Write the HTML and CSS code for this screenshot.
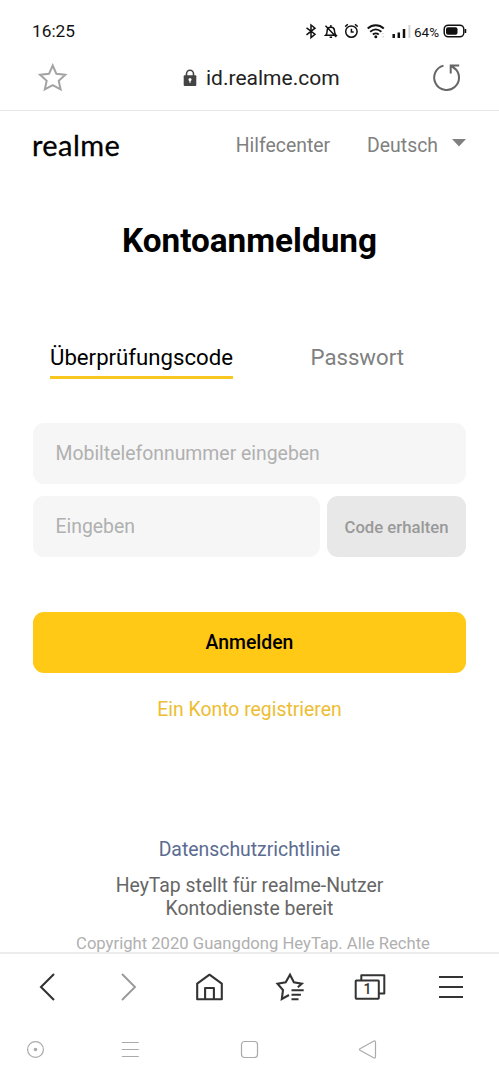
FILE: index.html
```html
<!DOCTYPE html>
<html lang="de">
<head>
<meta charset="utf-8">
<title>Kontoanmeldung</title>
<link rel="stylesheet" href="styles.css">
</head>
<body>
<div class="statusbar">
  <span class="clock">16:25</span>
  <div class="status-icons">
    <svg width="115" height="20" viewBox="0 0 115 20" fill="none" stroke="#111" stroke-width="1.500">
      <path d="M1.500 6.800L10 13.200 6 16.600V4L10 7.200 1.500 13.800"/>
      <path d="M20.700 14.300C22.300 13 22 11 22.200 9c.3-3 6.200-4.200 7.200 0 .2 2 0 3.600 1.600 5.300zM20.500 4.700l10.800 11.200M25.900 4v1.500M24.600 16.300h2.500"/>
      <circle cx="46.400" cy="10.600" r="5.700"/>
      <path d="M46.400 7.700v3.200h2.300M40.200 5.600l2.600-2.300M52.700 5.600L50 3.300"/>
      <path d="M62.700 7.500c4.800-4.300 11.300-4.300 16.100 0M65.200 10.700c3.600-3 7.600-3 11.200 0M67.800 13.500c2-1.500 4-1.500 6 0" stroke-width="1.900"/>
      <circle cx="70.800" cy="15.800" r="1.500" fill="#111" stroke="none"/>
      <path d="M76.600 13.300l1.200-1.300 1.200 1.300M76.600 15l1.200 1.300 1.200-1.300" stroke="#ccc" stroke-width=".8"/>
      <path d="M88.700 17v-4M93.800 17v-5.600M99 17V8" stroke-width="2.500"/>
      <path d="M104.400 17V4" stroke="#d4d4d4" stroke-width="2"/>
    </svg>
    <span class="percent">64%</span>
    <svg width="24" height="14" viewBox="0 0 24 14">
      <rect x="1.200" y="1.200" width="19.600" height="11.600" rx="4" fill="#fff" stroke="#111" stroke-width="1.500"/>
      <rect x="3" y="3.200" width="11.500" height="7.600" rx="2" fill="#111"/>
      <path d="M22.500 5v4" stroke="#111" stroke-width="1.500"/>
    </svg>
  </div>
</div>
<div class="urlbar">
  <svg width="30" height="30" viewBox="0 0 30 30" fill="none" stroke="#a3a3a3" stroke-width="2">
    <path d="M14.700 2.500l3.700 8.300 8.900 1-6.600 6 1.900 8.600-7.900-4.300-7.900 4.300 1.900-8.600-6.600-6 8.900-1z"/>
  </svg>
  <div class="url">
    <svg width="14" height="18" viewBox="0 0 14 18">
      <path d="M3.500 7V4.700a3.500 3.500 0 0 1 7 0V7" fill="none" stroke="#444" stroke-width="1.600"/>
      <rect x=".7" y="6.300" width="12.600" height="10.700" rx="1" fill="#444"/>
      <circle cx="7" cy="10.500" r="1.500" fill="#fff"/><path d="M7 10.500v3.300" stroke="#fff" stroke-width="1.200"/>
    </svg>
    <span>id.realme.com</span>
  </div>
  <svg width="30" height="30" viewBox="0 0 30 30" fill="none" stroke="#666" stroke-width="2">
    <path d="M11.500 2.600A12.400 12.400 0 1 0 21.500 4.300L19.500 3M18.700 10.500V2.500h8.500M18.700 2.500l5 4"/>
  </svg>
</div>
<main class="page">
  <header class="site-header">
    <span class="logo">realme</span>
    <span class="help">Hilfecenter</span>
    <span class="language">Deutsch</span>
    <svg class="caret" width="14" height="8" viewBox="0 0 14 8"><path d="M0 0h14L7 7.500z" fill="#808080"/></svg>
  </header>
  <h1 class="title">Kontoanmeldung</h1>
  <nav class="tabs">
    <span class="tab active">Überprüfungscode</span>
    <span class="tab">Passwort</span>
  </nav>
  <form class="form">
    <div class="field">Mobiltelefonnummer eingeben</div>
    <div class="code-row">
      <div class="field">Eingeben</div>
      <button type="button" class="get-code">Code erhalten</button>
    </div>
    <button type="button" class="submit">Anmelden</button>
  </form>
  <div class="register">Ein Konto registrieren</div>
  <footer class="footer">
    <div class="privacy">Datenschutzrichtlinie</div>
    <div class="service">HeyTap stellt für realme-Nutzer<br>Kontodienste bereit</div>
    <div class="copyright">Copyright 2020 Guangdong HeyTap. Alle Rechte</div>
  </footer>
</main>
<nav class="browser-nav">
  <svg viewBox="0 0 34 34" fill="none" stroke="#333" stroke-width="2.100"><path d="M23 4L10 17l13 13"/></svg>
  <svg viewBox="0 0 34 34" fill="none" stroke="#999" stroke-width="1.900"><path d="M10 4l13 13-13 13"/></svg>
  <svg viewBox="0 0 34 34" fill="none" stroke="#333" stroke-width="2.100" stroke-linejoin="round"><path d="M5.200 13.700L17.500 4.700l12.300 9v15.600H5.200zM13.100 29V18h8.800v11"/></svg>
  <svg viewBox="0 0 34 34" fill="none" stroke="#333" stroke-width="2.100"><path d="M16 25L8.800 29l1.200-9-5.500-6.300 8.200-1.500L17 4.700l3.900 7.500 7.900 1.500-4 3.500M18.500 20.200h12.200M18.500 24.700h9.400M18.500 29.200h7"/></svg>
  <svg viewBox="0 0 34 34" fill="none" stroke="#333" stroke-width="2" stroke-linejoin="round"><path d="M8.300 10V5.200h23v18.300h-5.500"/><rect x="2.700" y="10.400" width="23.100" height="18.300" rx=".6"/><text x="14.500" y="24.300" class="tab-count">1</text></svg>
  <svg viewBox="0 0 34 34" fill="none" stroke="#333" stroke-width="2.200"><path d="M5 7h24M5 17h24M5 27h24"/></svg>
</nav>
<div class="system-nav">
  <svg viewBox="0 0 20 20" fill="none" stroke="#aaa" stroke-width="1.200"><circle cx="10.500" cy="9.500" r="7.900"/><circle cx="10.500" cy="9.500" r="1.800" fill="#aaa" stroke="none"/></svg>
  <svg viewBox="0 0 20 20" fill="none" stroke="#aaa" stroke-width="1.200"><path d="M1.800 2.500h17M1.800 9.500h17M1.800 16.500h17"/></svg>
  <svg viewBox="0 0 20 20" fill="none" stroke="#aaa" stroke-width="1.200"><rect x="2.500" y="1.500" width="16" height="16" rx="3"/></svg>
  <svg viewBox="0 0 20 20" fill="none" stroke="#aaa" stroke-width="1.200" stroke-linejoin="round"><path d="M2 8.700L15.500 1.200q2-.8 2 1v14.600q0 1.800-2 1L2 10.300q-1-.8 0-1.600z"/></svg>
</div>
</body>
</html>
```
FILE: styles.css
```css
* { box-sizing: border-box; }
body {
  margin: 0;
  width: 499px;
  height: 1080px;
  overflow: hidden;
  display: flex;
  flex-direction: column;
  background: #fff;
  font-family: Roboto, "Noto Sans", sans-serif;
  font-size: 19.4px;
}
svg { display: block; flex: none; }
.statusbar {
  height: 46px;
  padding: 16px 30px 0 32px;
  display: flex;
  justify-content: space-between;
  align-items: center;
  color: #111;
}
.clock { font-size: 17.3px; }
.status-icons { display: flex; align-items: center; width: 164px; }
.percent { font-size: 13.5px; margin-left: -6px; width: 29px; padding-top: 1px; }
.urlbar {
  height: 65px;
  padding: 0 37px 0 38px;
  display: flex;
  align-items: center;
  border-bottom: 1px solid #e6e6e6;
  color: #222;
  font-size: 21px;
}
.url { display: flex; align-items: center; gap: 9px; margin: 0 auto 0 115px; }
.page { height: 841px; overflow: hidden; }
.site-header {
  height: 68px;
  padding: 0 33px 0 32px;
  display: flex;
  align-items: center;
  color: #808080;
}
.logo {
  font-family: Lato, sans-serif;
  font-size: 29px;
  line-height: 30px;
  letter-spacing: 0.4px;
  color: #000;
  -webkit-text-stroke: 0.3px #000;
}
.help { margin-left: auto; margin-right: 37px; }
.language { margin-right: 14px; }
.caret { margin-bottom: 4px; }
.title {
  margin: 41px 0 0;
  font-size: 33.3px;
  line-height: 42px;
  font-weight: 700;
  text-align: center;
  color: #000;
}
.tabs {
  margin: 79px 95px 0 50px;
  display: flex;
  justify-content: space-between;
  font-size: 22.2px;
  line-height: 32px;
  color: #808080;
}
.tab { height: 38px; }
.active { color: #000; border-bottom: 3px solid #f9c71f; }
.form { margin: 44px 33px 0; }
.field {
  height: 61px;
  line-height: 61px;
  padding-left: 22.5px;
  border-radius: 11px;
  background: #f6f6f6;
  color: #b0b0b0;
}
.code-row {
  margin-top: 12px;
  display: grid;
  grid-template-columns: 287px 1fr;
  gap: 7px;
}
button { border: 0; padding: 0; font-family: inherit; font-weight: 500; border-radius: 11px; height: 61px; }
.get-code { background: #e8e8e8; color: #999; font-size: 16.7px; padding-top: 2px; }
.submit { display: block; width: 100%; margin-top: 55px; background: #ffc915; color: #000; font-size: 19.4px; }
.register { margin-top: 22px; line-height: 30px; text-align: center; color: #edbd32; }
.footer { margin-top: 110px; text-align: center; }
.privacy { line-height: 30px; color: #5b6b91; }
.service { margin-top: 9px; line-height: 23px; color: #666; }
.copyright { margin: 12px -10px 0 -12px; line-height: 24px; font-size: 16.65px; color: #b0b0b0; white-space: nowrap; padding-left: 9px; }
.browser-nav {
  height: 67px;
  border-top: 2px solid #ececec;
  padding: 0 31px;
  display: flex;
  justify-content: space-between;
  align-items: center;
}
.browser-nav svg { width: 34px; height: 34px; }
.tab-count { font: 500 14px Roboto, sans-serif; text-anchor: middle; fill: #333; stroke: none; }
.system-nav {
  height: 61px;
  padding: 0 121px 0 25px;
  display: grid;
  grid-template-columns: 95px 119px 119px 20px;
  align-items: center;
}
.system-nav svg { width: 20px; height: 20px; }
```
